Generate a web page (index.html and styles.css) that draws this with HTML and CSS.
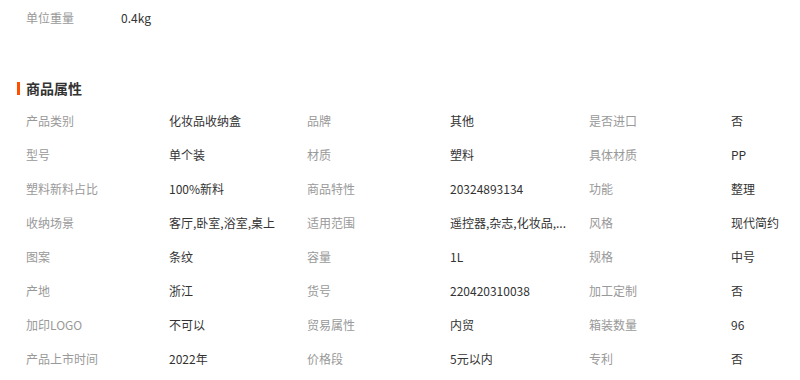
FILE: index.html
```html
<!DOCTYPE html>
<html lang="zh-CN">
<head>
<meta charset="utf-8">
<title>商品属性</title>
<link rel="stylesheet" href="styles.css">
</head>
<body>
<div class="page">
  <div class="top-row">
    <span class="top-label">单位重量</span>
    <span class="top-value">0.4kg</span>
  </div>

  <h2 class="section-title">商品属性</h2>

  <div class="attrs">
    <span class="lbl">产品类别</span><span class="val">化妆品收纳盒</span>
    <span class="lbl">品牌</span><span class="val">其他</span>
    <span class="lbl">是否进口</span><span class="val">否</span>

    <span class="lbl">型号</span><span class="val">单个装</span>
    <span class="lbl">材质</span><span class="val">塑料</span>
    <span class="lbl">具体材质</span><span class="val">PP</span>

    <span class="lbl">塑料新料占比</span><span class="val">100%新料</span>
    <span class="lbl">商品特性</span><span class="val">20324893134</span>
    <span class="lbl">功能</span><span class="val">整理</span>

    <span class="lbl">收纳场景</span><span class="val">客厅,卧室,浴室,桌上</span>
    <span class="lbl">适用范围</span><span class="val">遥控器,杂志,化妆品,...</span>
    <span class="lbl">风格</span><span class="val">现代简约</span>

    <span class="lbl">图案</span><span class="val">条纹</span>
    <span class="lbl">容量</span><span class="val">1L</span>
    <span class="lbl">规格</span><span class="val">中号</span>

    <span class="lbl">产地</span><span class="val">浙江</span>
    <span class="lbl">货号</span><span class="val">220420310038</span>
    <span class="lbl">加工定制</span><span class="val">否</span>

    <span class="lbl">加印LOGO</span><span class="val">不可以</span>
    <span class="lbl">贸易属性</span><span class="val">内贸</span>
    <span class="lbl">箱装数量</span><span class="val">96</span>

    <span class="lbl">产品上市时间</span><span class="val">2022年</span>
    <span class="lbl">价格段</span><span class="val">5元以内</span>
    <span class="lbl">专利</span><span class="val">否</span>
  </div>
</div>
</body>
</html>
```

FILE: styles.css
```css
html, body {
  margin: 0;
  padding: 0;
  background: #ffffff;
}

body {
  font-family: "Noto Sans CJK SC", "Noto Sans", "Liberation Sans", sans-serif;
  font-size: 12px;
  color: #333333;
}

.page {
  padding: 1px 0 0 26px;
}

.top-row {
  display: flex;
  height: 34px;
  line-height: 34px;
}

.top-label {
  width: 95px;
  color: #999999;
}

.top-value {
  color: #333333;
}

.section-title {
  position: relative;
  margin: 43px 0 6px 0;
  height: 20px;
  line-height: 20px;
  font-size: 14px;
  font-weight: bold;
  color: #333333;
}

.section-title::before {
  content: "";
  position: absolute;
  left: -9px;
  top: 4px;
  width: 3px;
  height: 13px;
  background: #ff5000;
}

.attrs {
  display: grid;
  grid-template-columns: 143px 138px 143px 139px 142px 1fr;
  grid-auto-rows: 34px;
  align-items: center;
}

.lbl {
  color: #999999;
  line-height: 34px;
  white-space: nowrap;
}

.val {
  color: #333333;
  line-height: 34px;
  white-space: nowrap;
}
```
